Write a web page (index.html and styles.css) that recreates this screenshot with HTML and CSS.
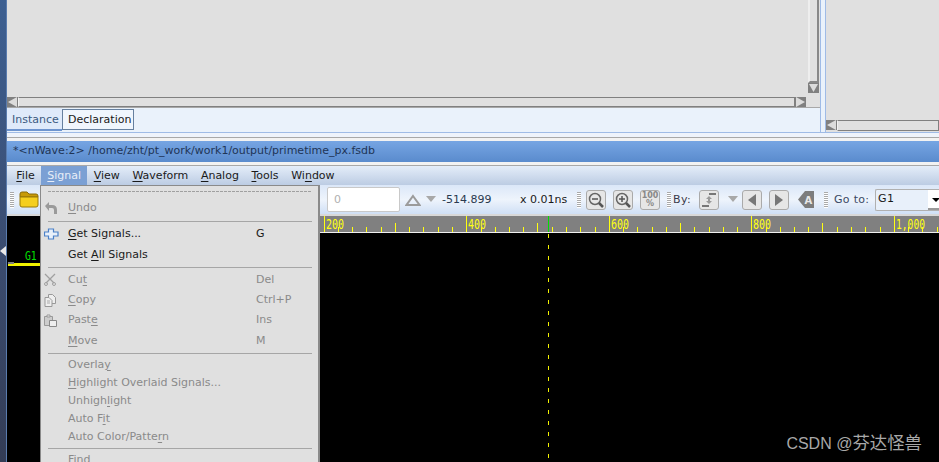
FILE: index.html
```html
<!DOCTYPE html>
<html lang="en">
<head>
    <meta charset="UTF-8">
    <title>nWave</title>
    <link rel="stylesheet" href="styles.css">
</head>
<body>
    <div class="edge"><span class="edge-arrow"></span></div>
    <div class="app">
        <div class="upper">
            <div class="upper-main">
                <div class="hier">
                    <div class="hier-body">
                        <div class="panel"></div>
                        <div class="vscroll">
                            <div class="vtrack"></div>
                            <div class="scroll-btn">
                                <svg width="11" height="10" viewBox="0 0 11 10"><path class="arrow" d="M1 1h9L5.500 9z"/></svg>
                            </div>
                        </div>
                    </div>
                    <div class="hscroll main-h">
                        <div class="scroll-btn">
                            <svg width="11" height="10" viewBox="0 0 11 10"><path class="arrow" d="M10 0v10L1 5z"/></svg>
                        </div>
                        <div class="htrack"></div>
                        <div class="scroll-btn">
                            <svg width="11" height="10" viewBox="0 0 11 10"><path class="arrow" d="M1 0v10l9-5z"/></svg>
                        </div>
                    </div>
                </div>
                <div class="tabs">
                    <div class="tab">Instance</div>
                    <div class="tab tab-on">Declaration</div>
                </div>
            </div>
            <div class="sash"></div>
            <div class="upper-side">
                <div class="panel"></div>
                <div class="hscroll">
                    <div class="scroll-btn">
                        <svg width="11" height="10" viewBox="0 0 11 10"><path class="arrow" d="M10 0v10L1 5z"/></svg>
                    </div>
                    <div class="htrack"></div>
                </div>
            </div>
        </div>

        <div class="title-wrap">
            <div class="title-bar">*&lt;nWave:2&gt; /home/zht/pt_work/work1/output/primetime_px.fsdb</div>
        </div>

        <div class="menu-bar">
            <span class="menu"><u>F</u>ile</span>
            <span class="menu menu-open"><u>S</u>ignal</span>
            <span class="menu"><u>V</u>iew</span>
            <span class="menu"><u>W</u>aveform</span>
            <span class="menu"><u>A</u>nalog</span>
            <span class="menu"><u>T</u>ools</span>
            <span class="menu">Wi<u>n</u>dow</span>
        </div>

        <div class="toolbar">
            <div class="tool-left">
                <span class="grip"></span>
                <svg class="folder" width="20" height="17" viewBox="0 0 20 17">
                    <path d="M1 3q0-2 2-2h5l2 2h7q2 0 2 2v1H1z" fill="#c89a08" stroke="#8a6a08"/>
                    <path d="M1 6h18v8q0 2-2 2H3q-2 0-2-2z" fill="#f5cf1f" stroke="#9a7a08"/>
                </svg>
            </div>
            <div class="tool-right">
                <div class="time-box">0</div>
                <svg class="spin-up" width="16" height="12" viewBox="0 0 16 12"><path d="M8 2l6.500 9H1.500z" fill="none" stroke="#9b9b9b" stroke-width="2"/></svg>
                <svg class="spin-down" width="10" height="7" viewBox="0 0 10 7"><path d="M0 0h10L5 6z" fill="#a8a8a8"/></svg>
                <span class="readout cursor-val">-514.899</span>
                <span class="readout scale-val">x 0.01ns</span>
                <span class="grip grip-zoom"></span>
                <button class="tool-btn">
                    <svg width="18" height="18" viewBox="0 0 18 18"><circle cx="8" cy="8" r="5.500" fill="#e8e8e8" stroke="#666" stroke-width="1.500"/><path d="M5 8h6" stroke="#555" stroke-width="1.500"/><path d="M12 12l4 4" stroke="#555" stroke-width="2.500"/></svg>
                </button>
                <button class="tool-btn">
                    <svg width="18" height="18" viewBox="0 0 18 18"><circle cx="8" cy="8" r="5.500" fill="#e8e8e8" stroke="#666" stroke-width="1.500"/><path d="M5 8h6M8 5v6" stroke="#555" stroke-width="1.500"/><path d="M12 12l4 4" stroke="#555" stroke-width="2.500"/></svg>
                </button>
                <button class="tool-btn pct-btn">100<br>%</button>
                <span class="grip grip-by"></span>
                <span class="by-label">By:</span>
                <button class="tool-btn by-btn">
                    <svg width="16" height="18" viewBox="0 0 16 18"><path d="M8 2h7v2H8zM1 14h7v2H1z" fill="#777"/><path d="M8 5l-3 3h2v2H5l3 3 3-3H9V8h2z" fill="#999"/></svg>
                </button>
                <svg class="by-drop" width="10" height="7" viewBox="0 0 10 7"><path d="M0 0h10L5 6z" fill="#a8a8a8"/></svg>
                <button class="tool-btn prev-btn">
                    <svg width="10" height="12" viewBox="0 0 10 12"><path d="M9 0v12L1 6z" fill="#777"/></svg>
                </button>
                <button class="tool-btn next-btn">
                    <svg width="10" height="12" viewBox="0 0 10 12"><path d="M1 0v12l8-6z" fill="#777"/></svg>
                </button>
                <svg class="tag-a" width="16" height="17" viewBox="0 0 16 17"><path d="M16 0v17H7L0 8.500 7 0z" fill="#7d7d7d"/><text x="6.500" y="12.500" class="tag-text">A</text></svg>
                <span class="grip grip-go"></span>
                <span class="goto-label">Go to:</span>
                <div class="combo">
                    <span class="combo-text">G1</span>
                    <span class="combo-btn"></span>
                </div>
            </div>
        </div>

        <div class="wave">
            <div class="ruler">
                <svg width="898" height="18" viewBox="41 214 898 18">
                    <path class="tick" d="M324.500 216v16M466.500 216v16M609.500 216v16M751.500 216v16M894.500 216v16"/>
                    <path class="tick" d="M395.500 223v9M537.500 223v9M680.500 223v9M822.500 223v9"/>
                    <path class="tick" d="M338.500 227v5M352.500 227v5M366.500 227v5M381.500 227v5M409.500 227v5M423.500 227v5M438.500 227v5M452.500 227v5M481.500 227v5M495.500 227v5M509.500 227v5M523.500 227v5M552.500 227v5M566.500 227v5M580.500 227v5M595.500 227v5M623.500 227v5M637.500 227v5M652.500 227v5M666.500 227v5M694.500 227v5M709.500 227v5M723.500 227v5M737.500 227v5M766.500 227v5M780.500 227v5M794.500 227v5M808.500 227v5M837.500 227v5M851.500 227v5M865.500 227v5M880.500 227v5M908.500 227v5M922.500 227v5M937.500 227v5"/>
                    <path class="cursor-tick" d="M548.500 216v16"/>
                    <text class="ruler-text" x="326" y="229" textLength="18" lengthAdjust="spacingAndGlyphs">200</text>
                    <text class="ruler-text" x="468" y="229" textLength="18" lengthAdjust="spacingAndGlyphs">400</text>
                    <text class="ruler-text" x="611" y="229" textLength="18" lengthAdjust="spacingAndGlyphs">600</text>
                    <text class="ruler-text" x="753" y="229" textLength="18" lengthAdjust="spacingAndGlyphs">800</text>
                    <text class="ruler-text" x="896" y="229" textLength="29" lengthAdjust="spacingAndGlyphs">1,000</text>
                </svg>
            </div>
            <div class="signal">
                <span class="signal-name">G1</span>
                <span class="signal-line"></span>
            </div>
            <div class="cursor-line"></div>
            <div class="watermark">CSDN @<span class="watermark-cjk">芬达怪兽</span></div>
        </div>

        <div class="popup">
            <div class="tearoff"></div>
            <div class="item off row-tall"><span class="item-icon"><svg width="14" height="14" viewBox="0 0 14 14"><path d="M1 5l4-4v3h3q5 0 5 5v4h-3V9q0-2-2-2H5v3z" fill="#9a9a9a"/></svg></span><span class="item-label"><u>U</u>ndo</span></div>
            <div class="sep sep-undo"></div>
            <div class="item row-tall"><span class="item-icon"><svg width="15" height="12" viewBox="0 0 15 12"><path d="M4.500 1h5v3h4.500v4H9.500v3h-5V8H.500V4h4z" fill="#e8f0fa" stroke="#4a80c8" stroke-width="1.200"/></svg></span><span class="item-label"><u>G</u>et Signals...</span><span class="item-key">G</span></div>
            <div class="item row-tall"><span class="item-icon"></span><span class="item-label">Get <u>A</u>ll Signals</span></div>
            <div class="sep"></div>
            <div class="item off row-tall"><span class="item-icon"><svg width="12" height="13" viewBox="0 0 12 13"><path d="M1 1l9 9M11 1l-9 9" stroke="#a0a0a0" stroke-width="1.300" fill="none"/><circle cx="2" cy="11" r="1.500" fill="none" stroke="#a0a0a0"/><circle cx="10" cy="11" r="1.500" fill="none" stroke="#a0a0a0"/></svg></span><span class="item-label">Cu<u>t</u></span><span class="item-key">Del</span></div>
            <div class="item off row-tall"><span class="item-icon"><svg width="13" height="13" viewBox="0 0 13 13"><path d="M4.500.500h4l3 3v6h-7z" fill="#eee" stroke="#999"/><path d="M1 3.500h4l3 3v6H1z" fill="#eee" stroke="#999"/><path d="M3 7h3M3 9h3" stroke="#aaa"/></svg></span><span class="item-label"><u>C</u>opy</span><span class="item-key">Ctrl+P</span></div>
            <div class="item off row-tall"><span class="item-icon"><svg width="13" height="13" viewBox="0 0 13 13"><path d="M.500 2.500h8v9h-8z" fill="#ccc" stroke="#999"/><path d="M3 1h3v2H3z" fill="#eee" stroke="#999"/><path d="M5.500 6.500h7v6h-7z" fill="#eee" stroke="#888"/></svg></span><span class="item-label">Past<u>e</u></span><span class="item-key">Ins</span></div>
            <div class="item off row-tall"><span class="item-icon"></span><span class="item-label"><u>M</u>ove</span><span class="item-key">M</span></div>
            <div class="sep"></div>
            <div class="item off"><span class="item-icon"></span><span class="item-label">Overla<u>y</u></span></div>
            <div class="item off"><span class="item-icon"></span><span class="item-label"><u>H</u>ighlight Overlaid Signals...</span></div>
            <div class="item off"><span class="item-icon"></span><span class="item-label">Unhigh<u>l</u>ight</span></div>
            <div class="item off"><span class="item-icon"></span><span class="item-label">Auto F<u>i</u>t</span></div>
            <div class="item off"><span class="item-icon"></span><span class="item-label">Auto Color/Patte<u>r</u>n</span></div>
            <div class="sep"></div>
            <div class="item off"><span class="item-icon"></span><span class="item-label">Find</span></div>
        </div>
    </div>
</body>
</html>
```
FILE: styles.css
```css
html, body { margin: 0; height: 462px; overflow: hidden; }
body {
    display: flex;
    font-family: "DejaVu Sans", sans-serif;
    font-size: 11px;
    color: #1a1a1a;
    background: #000;
}
u { text-underline-offset: 2px; text-decoration-thickness: 1px; }

.edge {
    width: 6px;
    border-right: 1px solid #5a7cae;
    background: linear-gradient(to bottom, #3d6092, #3a4a6c 60%, #333c55);
    position: relative;
}
.edge-arrow {
    position: absolute;
    left: 0;
    top: 246px;
    border: 5px solid transparent;
    border-right: 6px solid #e8e8e8;
    border-left: 0;
}

.app { flex: 1; position: relative; display: flex; flex-direction: column; min-width: 0; height: 462px; overflow: hidden; background: #eef3fb; }

/* upper panes */
.upper { height: 133px; flex: none; display: flex; background: #eaf2fb; border-bottom: 1px solid #9fbbe6; box-sizing: border-box; }
.upper-main { width: 813px; display: flex; flex-direction: column; }
.hier { height: 108px; display: flex; flex-direction: column; background: #e0e0e0; box-sizing: border-box; border-bottom: 1px solid #a8a8a8; }
.hier-body { height: 93px; flex: none; display: flex; margin-bottom: 4px; }
.panel { flex: 1; background: #e0e0e0; }
.vscroll { width: 11px; margin-right: 1px; display: flex; flex-direction: column; }
.vtrack { flex: 1; box-sizing: border-box; border-left: 2px solid #eee; border-right: 2px solid #888; border-bottom: 2px solid #888; }
.scroll-btn { width: 11px; height: 10px; background: #808080; flex: none; line-height: 0; }
.arrow { fill: #dcdcdc; }
.hscroll { height: 10px; display: flex; flex: none; }
.main-h { margin-right: 14px; }
.htrack { flex: 1; border-top: 1px solid #808080; border-bottom: 1px solid #808080; border-left: 1px solid #f2f2f2; border-right: 1px solid #808080; background: #e0e0e0; }

.tabs { flex: 1; display: flex; align-items: flex-start; background: #eaf2fb; }
.tab { height: 23px; line-height: 23px; padding: 0 3px 0 5px; box-sizing: border-box; width: 55px; color: #3c5a80; border-bottom: 2px solid #6d94cf; background: #dfeafa; }
.tab-on { width: 72px; height: 21px; margin-top: 1px; line-height: 19px; background: #f0f6fd; color: #1a1a1a; border: 1px solid #66809f; padding-left: 5px; }

.sash { width: 4px; border-left: 1px solid #9fbbe6; border-right: 1px solid #9fbbe6; background: #eaf2fb; }
.upper-side { flex: 1; display: flex; flex-direction: column; padding-bottom: 1px; background: #e0e0e0; }
.upper-side .hscroll { height: 11px; }

/* window title */
.title-wrap {
    flex: none;
    margin-top: 4px;
    padding: 3px 0;
    background: #f2f2f2;
    border-top: 1px solid #a8a8a8;
    border-bottom: 1px solid #a8a8a8;
}
.title-bar {
    height: 21px;
    line-height: 20px;
    padding-left: 6px;
    background: linear-gradient(to bottom, #76a5e3, #5a8bcd);
    color: #1f3556;
}

.menu-bar {
    flex: none;
    height: 19px;
    display: flex;
    padding-left: 3px;
    background: linear-gradient(to bottom, #e4edf9, #bccce3);
}
.menu { padding: 0 6.300px; line-height: 19px; }
.menu-open { background: #7ba0d4; color: #e8eef8; }

.toolbar {
    flex: none;
    height: 29px;
    display: flex;
    justify-content: space-between;
    background: linear-gradient(to bottom, #dbe7f8, #eef4fc 50%, #cfdff5);
    border-bottom: 2px solid #d8d8d8;
    align-items: center;
}
.tool-left, .tool-right { display: flex; align-items: center; }
.tool-left { padding-left: 3px; }
.grip {
    width: 4px;
    height: 16px;
    background: repeating-linear-gradient(to bottom, #a9a9a9 0 1px, #fff 1px 2px);
}
.folder { margin-left: 5px; }
.time-box { width: 65px; height: 23px; line-height: 23px; padding-left: 6px; margin-right: 5px; background: #fff; border: 1px solid #c9c9c9; border-radius: 2px; color: #b0b0b0; }
.spin-down { margin-left: 5px; }
.readout { color: #2a3a50; }
.cursor-val { margin-left: 6px; width: 78px; }
.scale-val { width: 57px; color: #1a1a1a; }
.grip-zoom { margin-right: 5px; }
.tool-btn {
    width: 20px;
    height: 20px;
    padding: 0;
    margin-right: 7px;
    display: flex;
    align-items: center;
    justify-content: center;
    background: #e6e6e6;
    border: 1px solid #aaa;
    border-radius: 3px;
}
.pct-btn { display: block; font-family: "DejaVu Sans", sans-serif; font-size: 8px; font-weight: bold; line-height: 8px; color: #888; }
.by-label { margin-left: 2px; width: 26px; letter-spacing: 0.4px; color: #3a3a4a; }
.by-btn { margin-right: 9px; }
.by-drop { margin-right: 4px; }
.tag-a { margin-left: 2px; margin-right: 10px; }
.tag-text { font-size: 10px; font-weight: bold; fill: #e8e8e8; }
.goto-label { margin-left: 6px; width: 41px; color: #3a4a66; letter-spacing: 0.3px; }
.combo { width: 64px; height: 22px; display: flex; justify-content: space-between; background: #e8f0fa; border: 1px solid #b0b0b0; border-right: 0; border-radius: 2px 0 0 2px; box-sizing: border-box; }
.combo-text { padding-left: 2px; line-height: 17px; letter-spacing: 0.6px; }
.combo-btn { width: 11px; background: #fff; position: relative; border-bottom: 2px solid #999; }
.combo-btn::after { content: ""; position: absolute; left: 4px; top: 8px; border: 4px solid transparent; border-top: 4px solid #000; border-bottom: 0; }

/* waveform */
.wave { flex: 1; position: relative; background: #000; }
.ruler { height: 16px; margin-left: 34px; background: #808080; border-bottom: 1px solid #f0f0f0; overflow: hidden; line-height: 0; }
.ruler svg { margin-top: -2px; }
.tick { stroke: #ffff10; stroke-width: 1; fill: none; }
.cursor-tick { stroke: #00e000; stroke-width: 1; }
.ruler-text { font-family: "DejaVu Sans Mono", monospace; font-size: 14px; fill: #ffff10; }
.signal { position: absolute; left: 0; top: 15px; width: 34px; height: 35px; }
.signal-name { position: absolute; left: 18px; top: 17px; font-family: "DejaVu Sans Mono", monospace; font-size: 13px; color: #00e000; transform: scaleX(0.75); transform-origin: left; }
.signal-line { position: absolute; left: 1px; right: 0; top: 32px; height: 3px; background: #f2f200; }
.signal-line::before { content: ""; position: absolute; left: 0; top: -1px; width: 6px; height: 2px; background: #808080; }
.cursor-line { position: absolute; left: 541px; top: 18px; bottom: 0; width: 1px; background: repeating-linear-gradient(to bottom, #f2f200 0 4px, transparent 4px 11px); }
.watermark { position: absolute; right: 17px; bottom: 8px; font-family: "Liberation Sans", "Noto Sans CJK SC", sans-serif; font-size: 16px; color: #a8a8a8; }
.watermark-cjk { font-size: 17.400px; }

/* Signal menu */
.popup {
    position: absolute;
    left: 33px;
    top: 185px;
    width: 280px;
    height: 277px;
    box-sizing: border-box;
    padding: 0 5px 0 6px;
    background: #e0e0e0;
    border: 1px solid #8a8a8a;
    border-right-width: 2px;
    border-bottom: 0;
    overflow: hidden;
}
.tearoff { margin: 5px 1px 6px; height: 1px; background: repeating-linear-gradient(to right, #a0a0a0 0 3px, transparent 3px 4px); }
.item { height: 18px; display: flex; align-items: center; line-height: 18px; margin-left: -4px; }
.row-tall { height: 20.250px; }
.off { color: #8a8a8a; }
.item-icon { width: 24px; padding-left: 1px; flex: none; display: flex; justify-content: flex-start; }
.item-label { width: 188px; }
.sep { height: 1px; background: #a6a6a6; margin: 2px 1px; }
.sep-undo { margin-top: 3px; }
```
